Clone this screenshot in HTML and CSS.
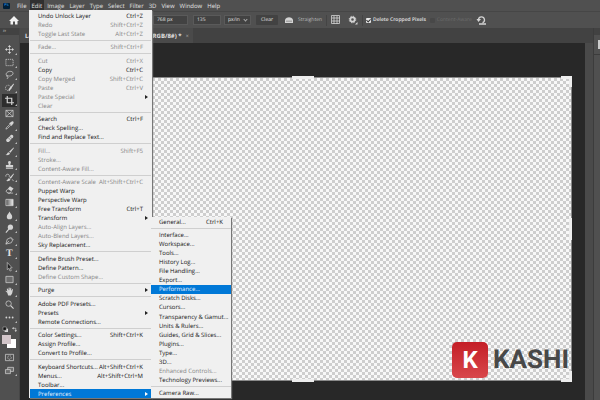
FILE: index.html
```
<!DOCTYPE html>
<html lang="en">
<head>
    <meta charset="utf-8">
    <title>Photo editor</title>
    <link rel="stylesheet" href="styles.css">
</head>
<body>
    <nav class="menubar">
        <span class="app-logo">Ps</span>
        <button>File</button>
        <button class="open">Edit</button>
        <button>Image</button>
        <button>Layer</button>
        <button>Type</button>
        <button>Select</button>
        <button>Filter</button>
        <button>3D</button>
        <button>View</button>
        <button>Window</button>
        <button>Help</button>
    </nav>

    <div class="options">
        <button class="home" aria-label="Home"><svg viewBox="0 0 10 10"><path d="M5 1 0 6h1.500v3.500h2.500V6.500h2v3H8.500V6H10z"/></svg></button>
        <input class="field field-size" aria-label="Height" value="768 px">
        <input class="field field-res" aria-label="Resolution" value="135">
        <span class="unit">
            <select class="field field-unit" aria-label="Unit"><option>px/in</option></select>
        </span>
        <button class="clear">Clear</button>
        <button class="straighten">
            <svg viewBox="0 0 10 10"><path d="M1 4.500C3 1.500 7 1.500 9 4.500V8H1z"/><path class="cut" d="M3 7V5.500M5 7V5.500M7 7V5.500"/></svg>
            Straighten
        </button>
        <span class="divider"></span>
        <button class="opt-icon" aria-label="Overlay"><svg viewBox="0 0 10 10"><path class="grid-lines" d="M1 3h8M1 6h8M3 1v8M6 1v8M.5.5h8v8h-8z"/></svg></button>
        <button class="opt-icon" aria-label="Crop options"><svg viewBox="0 0 10 10"><circle class="gear" cx="4.500" cy="4.500" r="2.200"/><circle class="teeth" cx="4.500" cy="4.500" r="3.300"/><path d="M9.500 7v2.500H7z"/></svg></button>
        <span class="divider"></span>
        <label class="check"><input type="checkbox" checked>Delete Cropped Pixels</label>
        <label class="check dim"><input type="checkbox" disabled>Content-Aware</label>
        <button class="opt-icon" aria-label="Reset"><svg viewBox="0 0 10 10"><path class="reset" d="M2.500 4.500a3 3 0 1 1 4 3.200M3 9h7"/><path d="M.5 4h4.500L2.500 7z"/></svg></button>
    </div>

    <div class="app">
        <aside class="toolbar">
            <div class="grip">››</div>
            <div class="tools">
                <button class="more" aria-label="Move"><svg viewBox="0 0 10 10"><path class="line" d="M5 1v8M1 5h8"/><path d="M5 0l1.800 2.200H3.200zM5 10l1.800-2.200H3.200zM0 5l2.200-1.800v3.600zM10 5L7.800 3.200v3.600z"/></svg></button>
                <button class="more" aria-label="Marquee"><svg viewBox="0 0 10 10"><path class="line dash" d="M1 1.500h8v7H1z"/></svg></button>
                <button class="more" aria-label="Lasso"><svg viewBox="0 0 10 10"><path class="line" d="M3 7C0 6 1 2 5 1.500S10 4 8 5.500 4 7 3 6.200 1.500 7.500 3 8 3 9.500 2 9.500"/></svg></button>
                <button class="more" aria-label="Quick selection"><svg viewBox="0 0 10 10"><circle class="line dash" cx="3.500" cy="5.500" r="3"/><path d="M9.500.5l.5.8L7 6 5 8.500 3.500 8 5 5.500z"/></svg></button>
                <button class="more active" aria-label="Crop"><svg viewBox="0 0 10 10"><path class="thick" d="M2.500 0v7.500H10M0 2.500h7.500V10"/></svg></button>
                <button aria-label="Frame"><svg viewBox="0 0 10 10"><path class="line" d="M1 1.500h8v7H1zM1 1.500l8 7M9 1.500l-8 7"/></svg></button>
                <button class="more" aria-label="Eyedropper"><svg viewBox="0 0 10 10"><path class="line" d="M5.500 3.500l-4 4L1 9l1.500-.5 4-4"/><path d="M4.500 2.500l1-.5L7.500.5C9 0 10 1 9.500 2.500L8 4.500l-.5 1z"/></svg></button>
                <button class="more" aria-label="Healing brush"><svg viewBox="0 0 10 10"><path d="M6.500 1C8 0 10 2 9 3.500L4.500 8.500C3 10 .5 8 1.500 6z"/><path class="cut" d="M3.500 4l3 3M5 2.500l3 3"/></svg></button>
                <button class="more" aria-label="Brush"><svg viewBox="0 0 10 10"><path d="M9.500.5L10 1 6 6.500 4.500 5.200zM4 5.700l1.500 1.300C5 9 3 9.500.5 9 2.500 8.500 2 6 4 5.700z"/></svg></button>
                <button class="more" aria-label="Clone stamp"><svg viewBox="0 0 10 10"><path d="M3.500 2a1.700 1.700 0 0 1 3 0c.5 1-.8 2-.5 3.500h3V8H1V5.500h3C4.300 4 3 3 3.500 2zM1 8.700h8v1H1z"/></svg></button>
                <button class="more" aria-label="History brush"><svg viewBox="0 0 10 10"><path d="M9.500.5L10 1 6.500 6.500 5 5.200zM4.500 5.700L6 7C5.500 9 3.500 9.500 1 9c2-.5 1.500-3 3.500-3.300z"/><path class="line" d="M1 4a2 2 0 1 1 3.500.5M8 7l1.500 2"/></svg></button>
                <button class="more" aria-label="Eraser"><svg viewBox="0 0 10 10"><path d="M5.500 1.500L9.500 4 7 7 3 4.500z"/><path class="line" d="M3 4.500L1 7l2.500 2h2L7 7M3 9h6"/></svg></button>
                <button class="more" aria-label="Gradient"><svg viewBox="0 0 10 10"><defs><linearGradient id="ramp"><stop stop-color="#555"/><stop offset="1" stop-color="#eee"/></linearGradient></defs><path fill="url(#ramp)" stroke="#d4d4d4" stroke-width=".8" d="M1 1.500h8v7H1z"/></svg></button>
                <button class="more" aria-label="Blur"><svg viewBox="0 0 10 10"><path d="M5 .5c1 2.500 3 3.500 3 5.800a3 3 0 0 1-6 0C2 4 4 3 5 .5z"/></svg></button>
                <button class="more" aria-label="Dodge"><svg viewBox="0 0 10 10"><circle cx="6" cy="3.500" r="2.900"/><path class="thick" d="M4.500 5.500L1 9.500"/></svg></button>
                <button class="more" aria-label="Pen"><svg viewBox="0 0 10 10"><path class="line" d="M1 9l1.500-5.500L6 2l2.500 2.500L7 7.500 1 9l3.500-3.500M6 1l3.500 3.500"/></svg></button>
                <button class="more letter" aria-label="Type">T</button>
                <button class="more" aria-label="Path selection"><svg viewBox="0 0 10 10"><path class="outline" d="M2.500.5L8 6.500H5.700L7 9.500 5.500 10 4.500 7 2.500 8.500z"/></svg></button>
                <button class="more" aria-label="Rectangle"><svg viewBox="0 0 10 10"><path class="line shade" d="M1 1.500h8v7H1z"/></svg></button>
                <button class="more" aria-label="Hand"><svg viewBox="0 0 10 10"><path d="M2.500 6.500L.5 4.500c.5-.7 1-.3 2 .5L2 2c.5-.8 1-.3 1.200.2L4 4V1c.5-.8 1-.5 1.200 0V4L6 1.200c.5-.5 1-.2 1 .3L6.700 4.300 8 2.500c.5-.4 1 0 .8.5L8 7 6.500 9.500h-3z"/></svg></button>
                <button aria-label="Zoom"><svg viewBox="0 0 10 10"><circle class="line" cx="4" cy="4" r="3"/><path class="thick" d="M6.300 6.300L9.500 9.500"/></svg></button>
                <button class="more" aria-label="Edit toolbar"><svg viewBox="0 0 10 10"><circle cx="1.500" cy="5" r="1"/><circle cx="5" cy="5" r="1"/><circle cx="8.500" cy="5" r="1"/></svg></button>
            </div>
            <div class="mini">
                <button aria-label="Default colors"><svg viewBox="0 0 6 6"><path d="M2 2h4v4H2z"/><path class="black" d="M0 0h4v4H0z"/></svg></button>
                <button aria-label="Swap colors"><svg viewBox="0 0 6 6"><path class="line" d="M1 1.500h3.500V5"/><path d="M0 1.500L2 0v3zM4.500 6L3 4h3z"/></svg></button>
            </div>
            <div class="swatches">
                <span class="swatch back"></span>
                <span class="swatch front"></span>
            </div>
            <div class="modes">
                <button aria-label="Quick mask"><svg viewBox="0 0 10 10"><path class="line" d="M.5 1.500h9v7h-9z"/><circle class="line dash" cx="5" cy="5" r="2"/></svg></button>
                <button class="more" aria-label="Screen mode"><svg viewBox="0 0 10 10"><path class="line shade" d="M3 1.500h6.500V6H3z"/><path class="line shade" d="M.5 4H6v4.500H.5z"/></svg></button>
            </div>
        </aside>

        <main class="document">
            <div class="tabs">
                <div class="tab"><span>La</span><span class="tab-mode">RGB/8#) *</span><button aria-label="Close">×</button></div>
            </div>
            <div class="stage">
                <div class="workspace">
                    <div class="canvas">
                        <i class="handle top"></i>
                        <i class="handle corner-top"></i>
                        <i class="handle right"></i>
                        <i class="handle corner-bottom"></i>
                        <i class="handle bottom"></i>
                    </div>
                </div>
                <div class="scrollbar"></div>
            </div>
        </main>

        <aside class="panel"><div class="panel-icon"><span></span></div></aside>
    </div>

    <ul class="menu edit-menu">
        <li>Undo Unlock Layer<kbd>Ctrl+Z</kbd></li>
        <li class="off">Redo<kbd>Shift+Ctrl+Z</kbd></li>
        <li class="off">Toggle Last State<kbd>Alt+Ctrl+Z</kbd></li>
        <li class="sep"></li>
        <li class="off">Fade...<kbd>Shift+Ctrl+F</kbd></li>
        <li class="sep"></li>
        <li class="off">Cut<kbd>Ctrl+X</kbd></li>
        <li>Copy<kbd>Ctrl+C</kbd></li>
        <li class="off">Copy Merged<kbd>Shift+Ctrl+C</kbd></li>
        <li class="off">Paste<kbd>Ctrl+V</kbd></li>
        <li class="off sub">Paste Special</li>
        <li class="off">Clear</li>
        <li class="sep"></li>
        <li>Search<kbd>Ctrl+F</kbd></li>
        <li>Check Spelling...</li>
        <li>Find and Replace Text...</li>
        <li class="sep"></li>
        <li class="off">Fill...<kbd>Shift+F5</kbd></li>
        <li class="off">Stroke...</li>
        <li class="off">Content-Aware Fill...</li>
        <li class="sep"></li>
        <li class="off">Content-Aware Scale<kbd>Alt+Shift+Ctrl+C</kbd></li>
        <li>Puppet Warp</li>
        <li>Perspective Warp</li>
        <li>Free Transform<kbd>Ctrl+T</kbd></li>
        <li class="sub">Transform</li>
        <li class="off">Auto-Align Layers...</li>
        <li class="off">Auto-Blend Layers...</li>
        <li>Sky Replacement...</li>
        <li class="sep"></li>
        <li>Define Brush Preset...</li>
        <li>Define Pattern...</li>
        <li class="off">Define Custom Shape...</li>
        <li class="sep"></li>
        <li class="sub">Purge</li>
        <li class="sep"></li>
        <li>Adobe PDF Presets...</li>
        <li class="sub">Presets</li>
        <li>Remote Connections...</li>
        <li class="sep"></li>
        <li>Color Settings...<kbd>Shift+Ctrl+K</kbd></li>
        <li>Assign Profile...</li>
        <li>Convert to Profile...</li>
        <li class="sep"></li>
        <li>Keyboard Shortcuts...<kbd>Alt+Shift+Ctrl+K</kbd></li>
        <li>Menus...<kbd>Alt+Shift+Ctrl+M</kbd></li>
        <li>Toolbar...</li>
        <li class="sub selected">Preferences</li>
    </ul>

    <ul class="menu prefs-menu">
        <li>General...<kbd>Ctrl+K</kbd></li>
        <li class="sep"></li>
        <li>Interface...</li>
        <li>Workspace...</li>
        <li>Tools...</li>
        <li>History Log...</li>
        <li>File Handling...</li>
        <li>Export...</li>
        <li class="selected">Performance...</li>
        <li>Scratch Disks...</li>
        <li>Cursors...</li>
        <li>Transparency &amp; Gamut...</li>
        <li>Units &amp; Rulers...</li>
        <li>Guides, Grid &amp; Slices...</li>
        <li>Plugins...</li>
        <li>Type...</li>
        <li>3D...</li>
        <li class="off">Enhanced Controls...</li>
        <li>Technology Previews...</li>
        <li class="sep"></li>
        <li>Camera Raw...</li>
    </ul>

    <div class="watermark">
        <span class="watermark-logo">K</span>
        <span class="watermark-name">KASHI</span>
    </div>
</body>
</html>
```
FILE: styles.css
```
:root {
    --bar: #505050;
    --bar-dark: #424242;
    --work: #282828;
    --icon: #d4d4d4;
    --blue: #0078d7;
}

* {
    box-sizing: border-box;
}

body {
    margin: 0;
    height: 100vh;
    display: flex;
    flex-direction: column;
    position: relative;
    overflow: hidden;
    background: var(--bar);
    color: #e2e2e2;
    font-family: 'Open Sans', 'Noto Sans', sans-serif;
    font-size: 6px;
    text-rendering: geometricPrecision;
}

button, input, select {
    font: inherit;
    color: inherit;
    text-rendering: inherit;
    margin: 0;
    padding: 0;
    border: 0;
    background: none;
}

svg {
    display: block;
    width: 10px;
    height: 10px;
    fill: var(--icon);
    overflow: visible;
}

.line, .thick, .reset, .teeth, .gear, .grid-lines {
    fill: none;
    stroke: var(--icon);
    stroke-width: 0.8;
}

.thick, .reset { stroke-width: 1.3; }
.gear { stroke-width: 1.8; }
.teeth { stroke-width: 1; stroke-dasharray: 1.3 1.3; }
.dash { stroke-dasharray: 1.4 0.8; }
.cut { stroke: var(--bar); stroke-width: 0.7; }
.shade { fill: #6c6c6c; }
.black { fill: #111; stroke: #ddd; stroke-width: 0.5; }
.outline { fill: #222; stroke: var(--icon); stroke-width: 0.7; }

/* top menu */
.menubar {
    flex: none;
    display: flex;
    align-items: center;
    height: 11px;
    padding-left: 3px;
}

.menubar button {
    height: 11px;
    padding: 0 2px;
    margin-right: 1px;
}

.menubar .open {
    background: #303030;
}

.app-logo {
    width: 7px;
    height: 6px;
    margin-right: 5px;
    border-radius: 1px;
    background: #001e36;
    color: #31a8ff;
    font-size: 4px;
    line-height: 6px;
    text-align: center;
}

/* options bar */
.options {
    flex: none;
    display: flex;
    align-items: center;
    height: 17px;
    border-top: 1px solid #464646;
    font-size: 5px;
}

.home {
    width: 29px;
    padding-left: 9px;
    margin-right: 124px;
}

.home svg { fill: #f2f2f2; }

.field {
    height: 10px;
    padding: 0 3px;
    background: #424242;
    border: 1px solid #5a5a5a;
}

.field-size { width: 35px; margin-right: 5px; }
.field-res { width: 28px; margin-right: 3px; }

.unit {
    display: flex;
    position: relative;
    width: 27px;
    margin-right: 5px;
}

.unit::after {
    content: '';
    position: absolute;
    right: 4px;
    top: 3px;
    width: 2px;
    height: 2px;
    border: solid #aaa;
    border-width: 0 1px 1px 0;
    transform: rotate(45deg);
}

.field-unit {
    appearance: none;
    width: 100%;
    line-height: 8px;
}

.clear {
    width: 22px;
    height: 10px;
    margin-right: 6px;
    background: #424242;
    border-radius: 1px;
}

.straighten {
    display: flex;
    align-items: center;
    gap: 4px;
    color: #bbb;
}

.divider {
    width: 1px;
    height: 11px;
    margin: 0 4px;
    background: #444;
}

.opt-icon + .opt-icon { margin-left: 7px; }
.opt-icon + .divider { margin-right: 3px; }

.check {
    display: flex;
    align-items: center;
    gap: 2px;
    margin-right: 4px;
    font-weight: 600;
}

.check input {
    appearance: none;
    width: 5px;
    height: 5px;
    border-radius: 1px;
    background: #e8e8e8;
}

.check input:checked::after {
    content: '';
    display: block;
    width: 2px;
    height: 3px;
    margin: 0 1px;
    border: solid #333;
    border-width: 0 1px 1px 0;
    transform: rotate(45deg);
}

.check.dim { color: #6c6c6c; font-weight: 400; }
.check.dim input { background: #484848; }

/* body of the window */
.app {
    flex: 1;
    display: flex;
    min-height: 0;
}

.toolbar {
    flex: none;
    display: flex;
    flex-direction: column;
    width: 20px;
    padding-bottom: 23px;
    border-right: 1px solid #464646;
}

.grip {
    height: 15px;
    padding-left: 3px;
    background: linear-gradient(var(--bar-dark) 7px, var(--bar) 7px);
    font-size: 5px;
    line-height: 6px;
}

.tools {
    flex: 1;
    display: flex;
    flex-direction: column;
    min-height: 0;
}

.tools button, .modes button {
    flex: 1;
    display: flex;
    align-items: center;
    width: 15px;
    min-height: 0;
    margin-left: 2px;
    padding-left: 3px;
    position: relative;
}

.tools svg, .modes svg {
    width: 9px;
    height: 9px;
}

.tools .active { background: #2d2d2d; }

.tools .letter {
    font: bold 10px/10px 'Liberation Serif', serif;
    padding-left: 4px;
}

.more::after {
    content: '';
    position: absolute;
    right: 0;
    bottom: 1px;
    border: 1px solid;
    border-color: transparent #bbb #bbb transparent;
}

.mini {
    display: flex;
    align-items: center;
    gap: 4px;
    height: 10px;
    padding-left: 3px;
}

.mini svg { width: 5px; height: 5px; }

.swatches {
    position: relative;
    height: 17px;
}

.swatch {
    position: absolute;
    width: 9px;
    height: 9px;
}

.front { left: 2px; top: 1px; background: #d2c5c9; }
.back { left: 7px; top: 5px; background: #fff; }

.modes {
    display: flex;
    flex-direction: column;
    height: 26px;
}

.document {
    flex: 1;
    display: flex;
    flex-direction: column;
    min-width: 0;
}

.tabs {
    flex: none;
    display: flex;
    height: 15px;
    background: var(--bar-dark);
}

.tab {
    display: flex;
    align-items: center;
    width: 173px;
    padding: 0 4px 0 5px;
    background: #4a4a4a;
    font-weight: 700;
}

.tab-mode { margin-left: auto; }

.tab button {
    margin-left: 4px;
    color: #999;
    font-weight: 400;
}

.stage {
    flex: 1;
    display: flex;
}

.workspace {
    flex: 1;
    display: flex;
    padding: 35px 14px 20px 15px;
    background: var(--work);
}

.scrollbar {
    width: 8px;
    background: #4a4a4a;
}

.canvas {
    flex: 1;
    position: relative;
    outline: 1px solid #8a8a8a;
    background: repeating-conic-gradient(#cecece 0 25%, #f8f8f8 0 50%) 0 0 / 6px 6px;
}

/* crop handles */
.handle {
    position: absolute;
    width: 22px;
    height: 3px;
    background: #eee;
}

.top { top: -2px; left: calc(50% - 11px); }
.bottom { bottom: -2px; left: calc(50% - 11px); }
.right { width: 3px; height: 22px; right: -1px; top: calc(50% - 11px); }

.corner-top, .corner-bottom {
    width: 11px;
    height: 11px;
    right: -1px;
    background: none;
    border-right: 3px solid #eee;
}

.corner-top { top: -2px; border-top: 3px solid #eee; }
.corner-bottom { bottom: -2px; border-bottom: 3px solid #eee; }

.panel {
    flex: none;
    width: 7px;
    border-left: 1px solid #3c3c3c;
    background: linear-gradient(var(--bar-dark) 7px, var(--bar) 7px);
    padding-top: 7px;
}

.panel-icon {
    display: flex;
    align-items: center;
    justify-content: flex-end;
    height: 20px;
    border-bottom: 1px solid #3c3c3c;
}

.panel-icon span {
    width: 2px;
    height: 9px;
    background: #ccc;
}

/* dropdown menus */
.menu {
    position: absolute;
    display: flex;
    flex-direction: column;
    margin: 0;
    padding: 0;
    list-style: none;
    background: #f0f0f0;
    color: #111;
    box-shadow: 1px 1px 1px #777;
}

.edit-menu {
    left: 29px;
    top: 10px;
    bottom: 2px;
    width: 123px;
    padding: 1px 1px 0;
}

.prefs-menu {
    left: 151px;
    top: 217px;
    bottom: 2px;
    width: 80px;
}

.menu li {
    flex: 2;
    display: flex;
    align-items: center;
    min-height: 0;
    padding: 0 8px;
    line-height: 8px;
    white-space: nowrap;
}

.menu .sep {
    flex: 1;
    padding: 0;
}

.menu .sep::before {
    content: '';
    flex: 1;
    height: 1px;
    background: #cfcfcf;
}

.menu kbd {
    margin-left: auto;
    font: inherit;
}

.menu .off { color: #858585; }

.menu .selected {
    background: var(--blue);
    color: #e8f3ff;
}

.menu .sub { padding-right: 3px; }

.sub::after {
    content: '';
    margin-left: auto;
    border: solid transparent;
    border-width: 2px 0 2px 3px;
    border-left-color: #222;
}

.selected.sub::after { border-left-color: #fff; }

/* logo over the lower right corner */
.watermark {
    position: absolute;
    right: 31px;
    bottom: 22px;
    display: flex;
    align-items: center;
    gap: 5px;
    font-family: Roboto, sans-serif;
}

.watermark-logo {
    width: 36px;
    height: 36px;
    border-radius: 5px;
    background: linear-gradient(#c41e26, #d8484c);
    color: #fff;
    font-size: 24px;
    font-weight: 700;
    line-height: 36px;
    text-align: center;
}

.watermark-name {
    color: #484848;
    font-size: 26px;
    font-weight: 700;
}
```
